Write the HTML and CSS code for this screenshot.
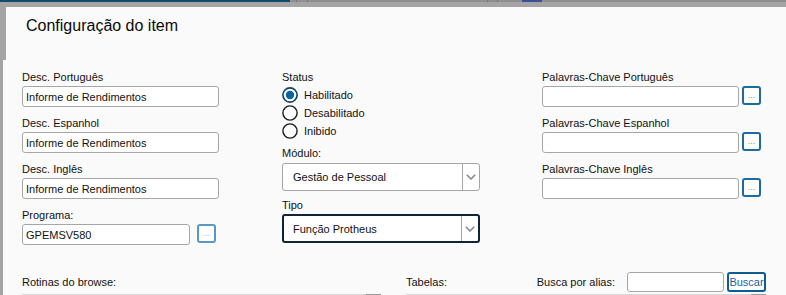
FILE: index.html
```html
<!DOCTYPE html>
<html lang="pt">
<head>
<meta charset="utf-8">
<title>Configuração do item</title>
<link rel="stylesheet" href="styles.css">
</head>
<body>
<div class="topbar">
  <div class="tb-blue"></div>
  <div class="tb-line tb-l1"></div>
  <div class="tb-line tb-l2"></div>
  <div class="tb-line tb-l3"></div>
  <div class="tb-line tb-l4"></div>
  <div class="tb-btn"></div>
</div>
<div class="panel">
  <div class="header">
    <h1 class="title">Configuração do item</h1>
  </div>
  <div class="form">
    <div class="col">
      <div class="field">
        <div class="label">Desc. Português</div>
        <div class="input input-desc">Informe de Rendimentos</div>
      </div>
      <div class="field">
        <div class="label">Desc. Espanhol</div>
        <div class="input input-desc">Informe de Rendimentos</div>
      </div>
      <div class="field">
        <div class="label">Desc. Inglês</div>
        <div class="input input-desc">Informe de Rendimentos</div>
      </div>
      <div class="field">
        <div class="label">Programa:</div>
        <div class="row row-prog">
          <div class="input input-prog">GPEMSV580</div>
          <div class="lookup lookup-off">...</div>
        </div>
      </div>
    </div>
    <div class="col">
      <div class="label">Status</div>
      <div class="radios">
        <div class="radio">
          <svg class="radio-icon" width="16" height="16" viewBox="0 0 16 16"><circle cx="8" cy="8" r="7.1" fill="#fff" stroke="#0b3f63" stroke-width="1.6"/><circle cx="8" cy="8" r="4.2" fill="#0a63a3"/></svg>
          <span>Habilitado</span>
        </div>
        <div class="radio">
          <svg class="radio-icon" width="16" height="16" viewBox="0 0 16 16"><circle cx="8" cy="8" r="7.1" fill="#fff" stroke="#1a1a1a" stroke-width="1.4"/></svg>
          <span>Desabilitado</span>
        </div>
        <div class="radio">
          <svg class="radio-icon" width="16" height="16" viewBox="0 0 16 16"><circle cx="8" cy="8" r="7.1" fill="#fff" stroke="#1a1a1a" stroke-width="1.4"/></svg>
          <span>Inibido</span>
        </div>
      </div>
      <div class="label label-mod">Módulo:</div>
      <div class="select select-mod">
        <div class="select-value">Gestão de Pessoal</div>
        <div class="select-arrow"><svg width="10" height="6" viewBox="0 0 10 6"><path d="M0.8 0.8 L5 5 L9.2 0.8" fill="none" stroke="#8a8a8a" stroke-width="1.6"/></svg></div>
      </div>
      <div class="label label-tipo">Tipo</div>
      <div class="select select-tipo">
        <div class="select-value">Função Protheus</div>
        <div class="select-arrow"><svg width="10" height="6" viewBox="0 0 10 6"><path d="M0.8 0.8 L5 5 L9.2 0.8" fill="none" stroke="#8a8a8a" stroke-width="1.6"/></svg></div>
      </div>
    </div>
    <div class="col">
      <div class="field">
        <div class="label">Palavras-Chave Português</div>
        <div class="row">
          <div class="input input-key"></div>
          <div class="lookup">...</div>
        </div>
      </div>
      <div class="field">
        <div class="label">Palavras-Chave Espanhol</div>
        <div class="row">
          <div class="input input-key"></div>
          <div class="lookup">...</div>
        </div>
      </div>
      <div class="field">
        <div class="label">Palavras-Chave Inglês</div>
        <div class="row">
          <div class="input input-key"></div>
          <div class="lookup">...</div>
        </div>
      </div>
    </div>
  </div>
  <div class="bottom">
    <div class="section">
      <div class="section-head">
        <div class="label">Rotinas do browse:</div>
      </div>
      <div class="box"><div class="box-fill"></div><div class="box-scroll"></div></div>
    </div>
    <div class="section">
      <div class="section-head">
        <div class="label">Tabelas:</div>
        <div class="label label-alias">Busca por alias:</div>
        <div class="input input-alias"></div>
        <div class="btn-buscar">Buscar</div>
      </div>
      <div class="box"><div class="box-fill"></div><div class="box-scroll"></div></div>
    </div>
  </div>
</div>
</body>
</html>
```

FILE: styles.css
```css
* { box-sizing: border-box; }

html, body {
  margin: 0;
  padding: 0;
  height: 295px;
  overflow: hidden;
}

body {
  background: #a4a4a4;
  font-family: "Liberation Sans", Arial, sans-serif;
  font-size: 11px;
  color: #111;
}

.topbar {
  height: 2px;
  display: flex;
  background: #8f8f8f;
}

.tb-blue {
  width: 290px;
  background: #0e4b6d;
}

.tb-line {
  width: 1px;
  background: #777;
}

.tb-l1 { margin-left: 6px; }
.tb-l2 { margin-left: 10px; }
.tb-l3 { margin-left: 179px; }
.tb-l4 { margin-left: 9px; }

.tb-btn {
  width: 20px;
  margin-left: 24px;
  background: #3d4f98;
}

.panel {
  margin-top: 5px;
  margin-left: 3px;
  background: #fafafa;
  height: 288px;
}

.header {
  height: 53px;
  padding-top: 10px;
  padding-left: 23px;
  box-shadow: inset 3px 0 0 #a4a4a4;
}

.title {
  margin: 0;
  font-size: 16px;
  line-height: 18px;
  font-weight: normal;
  color: #0a0a0a;
}

.form {
  margin-top: 10px;
  padding-left: 19px;
  display: grid;
  grid-template-columns: 260px 260px 1fr;
}

.col {
  display: flex;
  flex-direction: column;
}

.label {
  line-height: 14px;
  white-space: nowrap;
}

.field {
  display: flex;
  flex-direction: column;
  gap: 2px;
  margin-bottom: 9px;
}

.field:last-child { margin-bottom: 0; }

.input {
  height: 21px;
  border: 1px solid #a6a6a6;
  border-radius: 3px;
  background: #fff;
  padding-left: 3px;
  line-height: 14px;
  display: flex;
  align-items: center;
  white-space: nowrap;
}

.input-desc { width: 197px; }
.input-prog { width: 168px; }
.input-key { width: 197px; }

.row {
  display: flex;
  align-items: flex-start;
  gap: 3px;
}

.row-prog { gap: 7px; }

.lookup {
  width: 19px;
  height: 19px;
  border: 2px solid #1d6a9e;
  border-radius: 3px;
  background: #fff;
  color: #7d8fa3;
  font-size: 9px;
  line-height: 9px;
  display: flex;
  justify-content: center;
  align-items: flex-end;
  padding-bottom: 3px;
}

.lookup-off {
  border-color: #5b97c5;
  color: #a9b5c2;
}

.radios {
  margin-top: 3px;
  display: flex;
  flex-direction: column;
}

.radio {
  height: 18px;
  display: flex;
  align-items: flex-start;
  gap: 6px;
  line-height: 16px;
}

.radio-icon { display: block; flex: none; }

.label-mod { margin-top: 5px; }

.select {
  margin-top: 3px;
  width: 198px;
  display: flex;
  border-radius: 3px;
  background: #fff;
}

.select-mod {
  height: 28px;
  border: 1px solid #a6a6a6;
}

.select-mod .select-value { padding-left: 10px; }

.label-tipo { margin-top: 7px; }

.select-tipo {
  margin-top: 2px;
  height: 29px;
  border: 2px solid #0f2537;
}

.select-tipo .select-value { padding-left: 9px; }

.select-value {
  flex: 1;
  display: flex;
  align-items: center;
  line-height: 14px;
  white-space: nowrap;
}

.select-arrow {
  width: 17px;
  border-left: 1px solid #a6a6a6;
  display: flex;
  align-items: center;
  justify-content: center;
}

.select-arrow svg { display: block; }

.bottom {
  margin-top: 27px;
  padding-left: 19px;
  display: grid;
  grid-template-columns: 359px 360px;
  column-gap: 25px;
}

.section {
  display: flex;
  flex-direction: column;
}

.section-head {
  height: 20px;
  display: flex;
  align-items: center;
}

.label-alias { margin-left: auto; }

.input-alias {
  width: 97px;
  height: 20px;
  margin-left: 12px;
}

.btn-buscar {
  width: 39px;
  height: 20px;
  margin-left: 3px;
  border: 2px solid #0d5d90;
  border-radius: 3px;
  background: #fff;
  color: #1563a0;
  font-size: 11px;
  line-height: 14px;
  display: flex;
  justify-content: center;
  align-items: center;
}

.box {
  margin-top: 2px;
  height: 60px;
  display: flex;
}

.box-fill {
  flex: 1;
  border-top: 1px solid #d8d8d8;
}

.box-scroll {
  width: 15px;
  border-top: 1px solid #9a9a9a;
  background: #ececec;
}
```
